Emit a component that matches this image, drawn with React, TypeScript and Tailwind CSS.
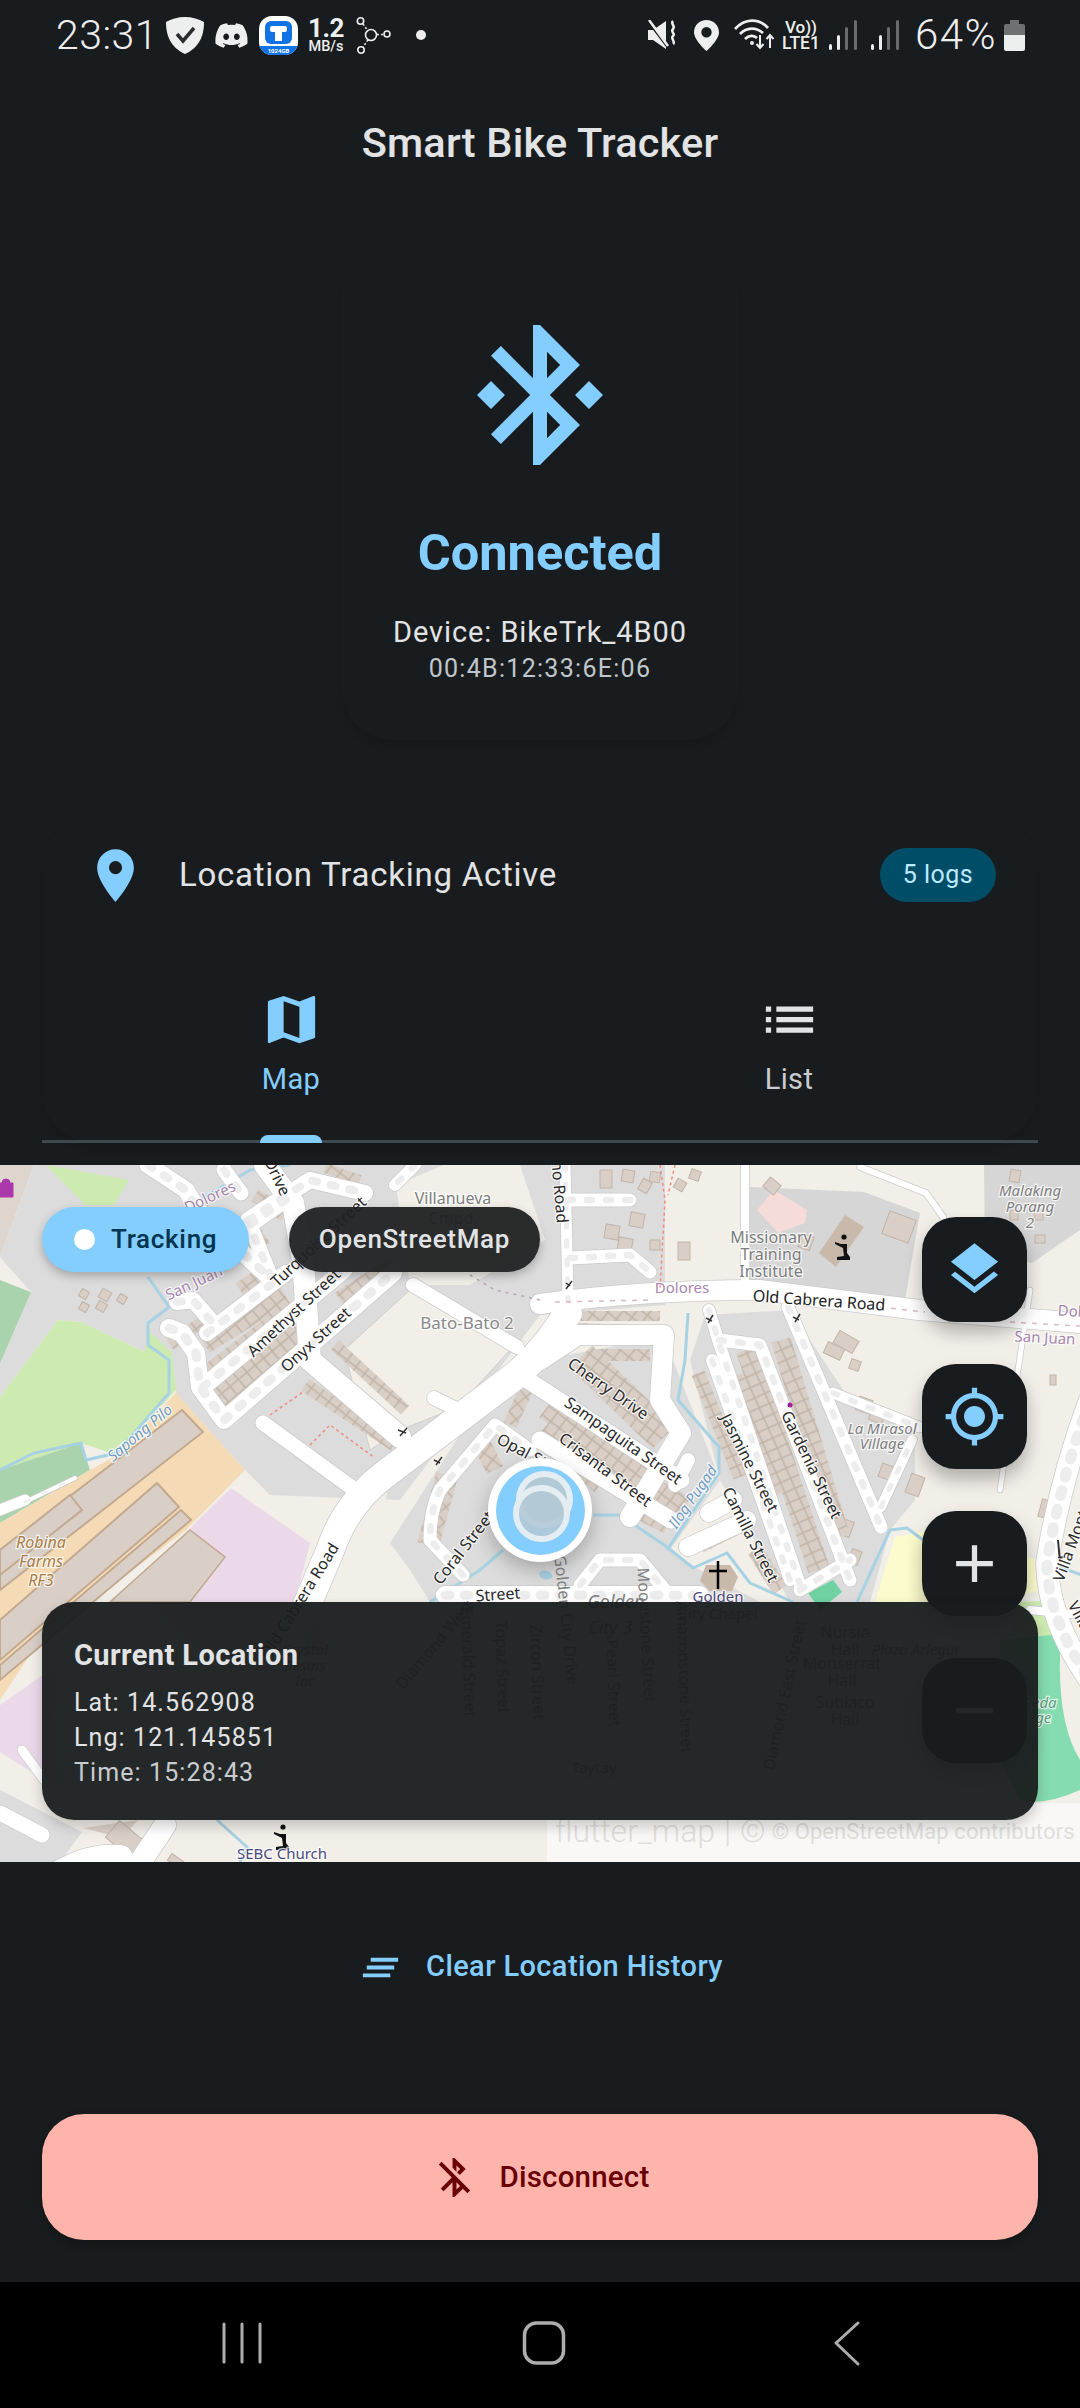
import React from "react";
import { FaDiscord } from "react-icons/fa";

const P = "#83CDFF";

function Mi({ d, size = 63, color = P, className = "" }: { d: string; size?: number; color?: string; className?: string }) {
  return (
    <svg width={size} height={size} viewBox="0 0 24 24" className={className} fill={color}>
      <path d={d} />
    </svg>
  );
}

const ICON = {
  bt: "M7 12l-2-2-2 2 2 2 2-2zm10.71-4.29L12 2h-1v7.59L6.41 5 5 6.41 10.59 12 5 17.59 6.41 19 11 14.41V22h1l5.71-5.71-4.3-4.29 4.3-4.29zM13 5.83l1.88 1.88L13 9.59V5.83zm1.88 10.46L13 18.17v-3.76l1.88 1.88zM19 10l-2 2 2 2 2-2-2-2z",
  pin: "M12 2C8.13 2 5 5.13 5 9c0 5.25 7 13 7 13s7-7.75 7-13c0-3.87-3.13-7-7-7zm0 9.5a2.5 2.5 0 0 1 0-5 2.5 2.5 0 0 1 0 5z",
  map: "M20.5 3l-.16.03L15 5.1 9 3 3.36 4.9c-.21.07-.36.25-.36.48V20.5c0 .28.22.5.5.5l.16-.03L9 18.9l6 2.1 5.64-1.9c.21-.07.36-.25.36-.48V3.5c0-.28-.22-.5-.5-.5zM15 19l-6-2.11V5l6 2.11V19z",
  list: "M3 13h2v-2H3v2zm0 4h2v-2H3v2zm0-8h2V7H3v2zm4 4h14v-2H7v2zm0 4h14v-2H7v2zM7 7v2h14V7H7z",
  layers: "M11.99 18.54l-7.37-5.73L3 14.07l9 7 9-7-1.63-1.27-7.38 5.74zM12 16l7.36-5.73L21 9l-9-7-9 7 1.63 1.27L12 16z",
  loc: "M12 8c-2.21 0-4 1.79-4 4s1.79 4 4 4 4-1.79 4-4-1.79-4-4-4zm8.94 3c-.46-4.17-3.77-7.48-7.94-7.94V1h-2v2.06C6.83 3.52 3.52 6.83 3.06 11H1v2h2.06c.46 4.17 3.77 7.48 7.94 7.94V23h2v-2.06c4.17-.46 7.48-3.77 7.94-7.94H23v-2h-2.06zM12 19c-3.87 0-7-3.13-7-7s3.13-7 7-7 7 3.13 7 7-3.13 7-7 7z",
  add: "M19 13h-6v6h-2v-6H5v-2h6V5h2v6h6v2z",
  remove: "M19 13H5v-2h14v2z",
  clear: "M5 13h14v-2H5v2zm-2 4h14v-2H3v2zM7 7v2h14V7H7z",
  btoff: "M13 5.83l1.88 1.88-1.6 1.6 1.41 1.41 3.02-3.02L12 2h-1v5.03l2 2v-3.2zM5.41 4L4 5.41 10.59 12 5 17.59 6.41 19 11 14.41V22h1l4.29-4.29 2.3 2.29L20 18.59 5.41 4zM13 18.17v-3.76l1.88 1.88L13 18.17z",
};

function StatusBar() {
  const fg = "#EDEEEE";
  return (
    <div className="h-[70px] pl-[56px] pr-[55px] flex items-center justify-between text-[#EDEEEE]">
      <div className="flex items-center">
        <span className="text-[41px] font-light leading-none w-[110px] tracking-[0.5px]">23:31</span>
        <svg width="38" height="37" viewBox="0 0 38 37">
          <path d="M19 0C12 0 5 2 0 5c0 13 4 25 19 32C34 30 38 18 38 5 33 2 26 0 19 0z" fill={fg} />
          <path d="M11 17l6 7 11-13" fill="none" stroke="#2a2d2e" strokeWidth="3.5" />
        </svg>
        <FaDiscord size={35} className="ml-[10px]" />
        <div className="ml-[10px] w-[39px] h-[39px] rounded-[13px] bg-white overflow-hidden relative">
          <div className="absolute left-[6px] top-[5px] w-[27px] h-[23px] rounded-[6px] bg-[#1273E6]" />
          <div className="absolute left-[11px] top-[10px] w-[17px] h-[6px] rounded-[2px] bg-white" />
          <div className="absolute left-[16px] top-[14px] w-[7px] h-[11px] bg-white" />
          <div className="absolute left-0 right-0 bottom-0 h-[9px] bg-[#1273E6] text-[6px] font-bold text-center leading-[9px] text-white">1024GB</div>
        </div>
        <div className="ml-[8px] w-[40px] flex flex-col items-center">
          <span className="text-[26px] font-bold leading-[22px] tracking-[-0.5px]">1.2</span>
          <span className="text-[14.5px] font-medium leading-[15px]">MB/s</span>
        </div>
        <svg width="36" height="37" viewBox="0 0 36 37" className="ml-[10px]" fill="none" stroke={fg} strokeWidth="1.6">
          <circle cx="4.5" cy="4" r="3.2" />
          <circle cx="31" cy="17" r="3" />
          <circle cx="5" cy="33" r="3.2" />
          <circle cx="15" cy="18" r="5.5" />
          <path d="M7 7l5 7M21 17.500h6M12 23l-5 7" strokeDasharray="2 2" />
        </svg>
        <div className="ml-[24px] w-[10px] h-[10px] rounded-full bg-[#EDEEEE]" />
      </div>
      <div className="flex items-center">
        <svg width="30" height="30" viewBox="0 0 30 30" fill={fg}>
          <path d="M0 10h5L18 1v28L5 20H0z" />
          <path d="M1 2l19 25" stroke="#191C1E" strokeWidth="3" />
          <path d="M1 0l19 26" stroke={fg} strokeWidth="2.5" />
          <path d="M25 1c-3 3 3 5 0 8s3 5 0 7 3 6 0 8" fill="none" stroke={fg} strokeWidth="2.500" />
        </svg>
        <svg width="25" height="31" viewBox="0 0 25 31" className="ml-[16px]" fill={fg}>
          <path fillRule="evenodd" d="M12.5 0C5.600 0 0 5.400 0 12.200 0 20 12.500 31 12.500 31S25 20 25 12.200C25 5.400 19.400 0 12.500 0zm0 7a5.200 5.200 0 1 1 0 10.400 5.200 5.200 0 0 1 0-10.400z" />
        </svg>
        <svg width="42" height="32" viewBox="0 0 42 32" className="ml-[15px]" fill="none" stroke={fg} strokeWidth="2.8">
          <path d="M1 10C11 -1 25 -1 34 9M6 15c7-7 16-7 23-1M11 20c4-4 9-4 12-1" />
          <circle cx="18" cy="24" r="2" fill={fg} stroke="none" />
          <path d="M26 16v13m-3.500-4l3.500 4 3.500-4M36 29V16m-3.500 4l3.500-4 3.500 4" strokeWidth="2" />
        </svg>
        <div className="ml-[5px] w-[40px] flex flex-col items-center">
          <span className="text-[17px] leading-[17px] font-medium">Vo))</span>
          <span className="text-[17.500px] leading-[15px] font-medium tracking-[0px]">LTE1</span>
        </div>
        {[0, 1].map((i) => (
          <svg key={i} width="29" height="30" viewBox="0 0 29 30" className={i === 0 ? "ml-[8px]" : "ml-[13px]"}>
            <rect x="0" y="24" width="3" height="6" rx="1.500" fill={fg} />
            <rect x="8" y="15" width="3" height="15" rx="1.500" fill={fg} />
            <rect x="16" y="7" width="3" height="23" rx="1.500" fill="#6a6c6d" />
            <rect x="25" y="0" width="3" height="30" rx="1.500" fill="#6a6c6d" />
          </svg>
        ))}
        <span className="ml-[15px] w-[82px] text-[42px] font-light leading-none tracking-[1.5px] whitespace-nowrap">64%</span>
        <svg width="21" height="31" viewBox="0 0 21 31" className="ml-[7px]">
          <path d="M6 0h9v4h4a2 2 0 0 1 2 2v9H0V6a2 2 0 0 1 2-2h4z" fill="#6f7071" />
          <path d="M0 15h21v14a2 2 0 0 1-2 2H2a2 2 0 0 1-2-2z" fill={fg} />
        </svg>
      </div>
    </div>
  );
}

type RoadT = [string, number, boolean?];
const roads: RoadT[] = [
  ["M292 1640L330 1551Q345 1505 384 1475L507 1382Q540 1358 568 1313", 28],
  ["M540 1304Q640 1290 760 1290L919 1310L1080 1323", 20],
  ["M265 1165L293 1203L303 1260L310 1360L400 1437", 22],
  ["M148 1165L186 1190L200 1213L272 1280", 17, true],
  ["M224 1170L241 1193", 15, true],
  ["M177 1302L193 1300L213 1323", 16, true],
  ["M169 1328L182 1333L196 1353L200 1387L224 1420L393 1273", 18, true],
  ["M203 1387L344 1270", 17, true],
  ["M207 1333L286 1273", 16, true],
  ["M248 1220L310 1180L365 1193", 16, true],
  ["M286 1200L250 1225L272 1280", 15, true],
  ["M413 1285L517 1347", 14],
  ["M434 1398L458 1410", 14],
  ["M263 1423L351 1487", 15],
  ["M415 1165L395 1185", 12, true],
  ["M565 1165L568 1300", 11, true],
  ["M568 1200H630", 13, true],
  ["M570 1258L630 1255L650 1272", 13, true],
  ["M540 1360L578 1335H664L660 1400L681 1433L630 1517", 20],
  ["M520 1375L681 1480", 17],
  ["M540 1440L671 1520", 17],
  ["M688 1460L675 1485", 14],
  ["M745 1165V1290", 8],
  ["M860 1167L926 1193L943 1217", 6],
  ["M709 1310L719 1343L800 1585", 12, true],
  ["M712 1360L790 1580", 12, true],
  ["M719 1340L760 1345L850 1580", 13, true],
  ["M788 1307L881 1527", 13, true],
  ["M833 1393L919 1427", 11, true],
  ["M881 1507L912 1440", 10, true],
  ["M688 1547L747 1520", 18],
  ["M709 1513L733 1500", 18],
  ["M800 1590L850 1560", 13, true],
  ["M1090 1400Q1060 1480 1047 1563Q1048 1620 1090 1680", 22, true],
  ["M1030 1290L1000 1490", 5],
  ["M463 1575L430 1540Q430 1510 440 1490L495 1425L530 1450", 13, true],
  ["M445 1595H700", 18, true],
  ["M580 1585L600 1560H640L665 1590", 13, true],
  ["M0 1813L42 1835", 15],
  ["M165 1825L135 1870", 22],
  ["M50 1880Q85 1855 120 1858", 26],
  ["M22 1750L44 1780", 9],
  ["M0 1510L25 1500", 11],
  ["M25 1502L75 1478", 4, true],
  ["M1030 1610L1080 1615", 8],
];

type StripT = [string, number, string];
const strips: StripT[] = [
  ["M205 1380L295 1310", 24, "h1"],
  ["M218 1402L300 1332", 28, "h1"],
  ["M340 1300L395 1265", 18, "h1"],
  ["M205 1345L285 1295", 18, "h1"],
  ["M240 1290L270 1270", 16, "h1"],
  ["M170 1345L205 1320", 12, "h1"],
  ["M220 1265L265 1235", 18, "h1"],
  ["M305 1385L395 1445", 14, "h2"],
  ["M335 1345L405 1410", 12, "h2"],
  ["M255 1195L285 1215", 14, "h2"],
  ["M190 1195L205 1210", 12, "h2"],
  ["M325 1168L360 1180", 10, "h2"],
  ["M547 1407L643 1480", 26, "h2"],
  ["M581 1357L664 1437", 32, "h2"],
  ["M540 1433L602 1483", 24, "h2"],
  ["M650 1487L685 1507", 22, "h2"],
  ["M640 1513L667 1527", 14, "h2"],
  ["M560 1316H660", 10, "h2"],
  ["M575 1328L665 1331", 10, "h2"],
  ["M595 1355H650", 12, "h2"],
  ["M528 1385L510 1425", 14, "h1"],
  ["M747 1350L819 1570", 22, "h3"],
  ["M733 1377L781 1493", 20, "h3"],
  ["M781 1340L840 1537", 20, "h3"],
  ["M698 1373L740 1477", 14, "h3"],
  ["M700 1545L750 1520", 16, "h1"],
  ["M755 1550L780 1590", 16, "h3"],
  ["M447 1475L428 1545", 22, "h1"],
  ["M480 1440L495 1470", 18, "h2"],
];

const blocks: [number, number, number, number, number][] = [
  [100, 1290, 10, 10, 30], [80, 1290, 8, 8, 30], [97, 1302, 9, 9, 30], [118, 1295, 8, 8, 30], [80, 1303, 8, 8, 30],
  [622, 1170, 12, 12, 10], [605, 1225, 14, 14, 10], [630, 1213, 14, 14, 10], [618, 1238, 14, 14, 10], [650, 1240, 10, 10, 0], [678, 1242, 12, 18, 0],
  [600, 1170, 12, 18, 0], [640, 1180, 10, 12, 30], [650, 1172, 10, 10, 10], [675, 1180, 10, 10, 30], [690, 1170, 10, 10, 20],
  [885, 1215, 28, 24, 20], [765, 1180, 14, 12, 40], [800, 1235, 12, 14, 20],
  [825, 1345, 18, 12, 25], [835, 1335, 22, 14, 30], [850, 1360, 10, 10, 20], [857, 1398, 14, 14, 20], [870, 1410, 14, 12, 20],
  [880, 1465, 14, 14, 20], [908, 1475, 14, 20, 20], [955, 1372, 8, 10, 0], [1050, 1375, 6, 10, 0], [992, 1415, 14, 14, 0], [1040, 1500, 12, 18, 15],
  [1045, 1545, 8, 18, 15], [840, 1520, 12, 16, 20], [850, 1550, 10, 14, 20], [975, 1300, 20, 20, 0],
  [168, 1858, 18, 8, 35], [108, 1830, 38, 22, 40], [1010, 1210, 8, 10, 0], [1035, 1210, 8, 10, 0], [1035, 1235, 10, 8, 0], [1010, 1170, 10, 12, 10],
];

type L = { t: string; x: number; y: number; r?: number; s: number; c?: string; i?: boolean };
const labels: L[] = [
  { t: "Villanueva", x: 453, y: 1204, s: 16, c: "#7d7d7d" },
  { t: "Cmpd.", x: 453, y: 1224, s: 16, c: "#7d7d7d" },
  { t: "Bato-Bato 2", x: 467, y: 1329, s: 17, c: "#8a8a8a" },
  { t: "Missionary", x: 771, y: 1243, s: 16, c: "#7d7d7d" },
  { t: "Training", x: 771, y: 1260, s: 16, c: "#7d7d7d" },
  { t: "Institute", x: 771, y: 1277, s: 16, c: "#7d7d7d" },
  { t: "Dolores", x: 682, y: 1293, s: 15, c: "#a586ad" },
  { t: "Dolores", x: 210, y: 1202, s: 15, c: "#a586ad", r: -25 },
  { t: "San Juan", x: 194, y: 1288, s: 15, c: "#a586ad", r: -25 },
  { t: "Dolores", x: 1085, y: 1317, s: 15, c: "#a586ad", r: 3 },
  { t: "San Juan", x: 1045, y: 1343, s: 15, c: "#a586ad", r: 3 },
  { t: "Malaking", x: 1030, y: 1196, s: 15, c: "#808080", i: true },
  { t: "Porang", x: 1030, y: 1212, s: 15, c: "#808080", i: true },
  { t: "2", x: 1030, y: 1228, s: 15, c: "#808080", i: true },
  { t: "Old Cabrera Road", x: 819, y: 1306, s: 16, c: "#222", r: 4 },
  { t: "Cherry Drive", x: 608, y: 1394, s: 16, r: 35 },
  { t: "Sampaguita Street", x: 623, y: 1446, s: 16, r: 35 },
  { t: "Crisanta Street", x: 605, y: 1475, s: 16, r: 37 },
  { t: "Jasmine Street", x: 749, y: 1468, s: 16, r: 63 },
  { t: "Gardenia Street", x: 811, y: 1470, s: 16, r: 64 },
  { t: "Camilla Street", x: 750, y: 1540, s: 16, r: 63 },
  { t: "Ilog Pugad", x: 693, y: 1502, s: 15, c: "#6f9bc4", i: true, r: -55 },
  { t: "Sapong Pilo", x: 140, y: 1438, s: 15, c: "#6f9bc4", i: true, r: -40 },
  { t: "La Mirasol", x: 882, y: 1434, s: 15, c: "#808080", i: true },
  { t: "Village", x: 882, y: 1449, s: 15, c: "#808080", i: true },
  { t: "Golden", x: 718, y: 1602, s: 15, c: "#4a4a7a" },
  { t: "City Chapel", x: 718, y: 1619, s: 15, c: "#4a4a7a" },
  { t: "Villa Montserrat", x: 1079, y: 1530, s: 16, r: -70 },
  { t: "Villa Montserrat", x: 1100, y: 1660, s: 16, r: 62 },
  { t: "Opal Street", x: 535, y: 1463, s: 16, r: 28 },
  { t: "Coral Street", x: 464, y: 1553, s: 16, r: -52 },
  { t: "Onyx Street", x: 316, y: 1345, s: 16, r: -42 },
  { t: "Amethyst Street", x: 294, y: 1318, s: 16, r: -43 },
  { t: "Turquoise Street", x: 319, y: 1247, s: 16, r: -43 },
  { t: "Drive", x: 277, y: 1182, s: 16, r: 65 },
  { t: "ino Road", x: 559, y: 1195, s: 16, r: 85 },
  { t: "Robina", x: 41, y: 1548, s: 16, c: "#a87c45", i: true },
  { t: "Farms", x: 41, y: 1567, s: 16, c: "#a87c45", i: true },
  { t: "RF3", x: 41, y: 1586, s: 16, c: "#a87c45", i: true },
  { t: "Old Cabrera Road", x: 300, y: 1606, s: 16, r: -58 },
  { t: "Street", x: 498, y: 1600, s: 16, r: -4 },
  { t: "Diamond West", x: 435, y: 1650, s: 16, r: -50 },
  { t: "Golden City Drive", x: 566, y: 1625, s: 16, r: 84 },
  { t: "Moonstone Street", x: 646, y: 1640, s: 16, r: 87 },
  { t: "Golden", x: 616, y: 1608, s: 18, c: "#808080", i: true },
  { t: "City 3", x: 610, y: 1634, s: 18, c: "#808080", i: true },
  { t: "Emerald Street", x: 468, y: 1667, s: 16, r: 88 },
  { t: "Topaz Street", x: 502, y: 1672, s: 16, r: 88 },
  { t: "Zircon Street", x: 537, y: 1677, s: 16, r: 88 },
  { t: "Pearl Street", x: 613, y: 1688, s: 16, r: 88 },
  { t: "Amazonstone Street", x: 684, y: 1682, s: 16, r: 88 },
  { t: "Diamond East Street", x: 785, y: 1700, s: 16, r: -78 },
  { t: "Nursia", x: 845, y: 1638, s: 16, c: "#666" },
  { t: "Hall", x: 845, y: 1655, s: 16, c: "#666" },
  { t: "Monserrat", x: 842, y: 1669, s: 16, c: "#666" },
  { t: "Hall", x: 842, y: 1686, s: 16, c: "#666" },
  { t: "Subiaco", x: 845, y: 1708, s: 16, c: "#666" },
  { t: "Hall", x: 845, y: 1725, s: 16, c: "#666" },
  { t: "Plaza Arlegui", x: 915, y: 1655, s: 15, c: "#666", i: true },
  { t: "Taytay", x: 594, y: 1773, s: 15, c: "#666" },
  { t: "Crystal", x: 305, y: 1655, s: 15, c: "#666", i: true },
  { t: "Resins", x: 305, y: 1671, s: 15, c: "#666", i: true },
  { t: "Inc", x: 305, y: 1686, s: 15, c: "#666", i: true },
  { t: "SEBC Church", x: 282, y: 1859, s: 15, c: "#4a4a7a" },
  { t: "Reda", x: 1040, y: 1708, s: 15, c: "#5f9f80", i: true },
  { t: "College", x: 1027, y: 1723, s: 15, c: "#5f9f80", i: true },
];

function Kneel({ x, y }: { x: number; y: number }) {
  return (
    <g transform={`translate(${x} ${y})`} fill="#111">
      <circle cx="1" cy="-11" r="2.600" />
      <path d="M-8-6l6 2h6v9l3 4v3H-6v-3l7-1-1-8-8-4z" />
    </g>
  );
}

function underPanel(l: L) {
  return l.y > 1606 && l.y < 1820 && l.x > 60 && l.x < 1020;
}

function MapArt() {
  const drawn = roads.filter((r) => r[1] > 0);
  return (
    <svg className="absolute inset-0 w-full h-full" viewBox="0 1165 1080 697" fontFamily="'Noto Sans', sans-serif">
      <defs>
        {[
          ["h1", -40],
          ["h2", 38],
          ["h3", 66],
        ].map(([id, a]) => (
          <pattern key={id as string} id={id as string} width="11" height="11" patternUnits="userSpaceOnUse" patternTransform={`rotate(${a})`}>
            <rect width="11" height="11" fill="#d9cfc7" stroke="#c2b3a6" strokeWidth="1.500" />
          </pattern>
        ))}
      </defs>
      <rect x="0" y="1165" width="1080" height="697" fill="#f2efe9" />
      {/* landuse */}
      <path d="M0 1165H34L0 1257z" fill="#dfd5cf" />
      <path d="M34 1165H665V1305L540 1315L400 1500L270 1495L245 1470L176 1393L172 1353L145 1352L81 1322L58 1320L0 1397V1257z" fill="#dcdcdc" />
      <path d="M46 1165L129 1180L114 1205L85 1205z" fill="#cdebb0" />
      <path d="M0 1280L31 1292L0 1363z" fill="#a9d3ac" />
      <path d="M0 1257L31 1292L0 1280z" fill="#f2efe9" />
      <path d="M0 1397L58 1320L81 1322L145 1352L148 1330L172 1353L176 1390L117 1455L81 1443L0 1470z" fill="#cdebb0" />
      <path d="M0 1470L81 1443L90 1470L0 1523z" fill="#a9d3ac" />
      <path d="M0 1523L90 1470L117 1455L176 1393L245 1470L186 1530L40 1640L0 1700z" fill="#f5dbb5" />
      <path d="M182 1410L203 1432L0 1590V1550z" fill="#d9cfc7" stroke="#c2a98f" strokeWidth="2" />
      <path d="M157 1483L179 1507L0 1660V1620z" fill="#d9cfc7" stroke="#c2a98f" strokeWidth="2" />
      <path d="M181 1510L191 1520L0 1680V1665z" fill="#d9cfc7" stroke="#c2a98f" strokeWidth="2" />
      <path d="M70 1495L82 1510L0 1575V1550z" fill="#d9cfc7" stroke="#c2a98f" strokeWidth="2" />
      <path d="M191 1527L231 1488L310 1543L295 1602L330 1650L200 1650L150 1602z" fill="#ebd9e9" />
      <path d="M190 1530L225 1557L190 1602H130L110 1602z" fill="#d9cfc7" stroke="#c2a98f" strokeWidth="1.500" />
      <path d="M0 1705L50 1670L60 1790L0 1752z" fill="#ebd9e9" />
      <path d="M0 1790L82 1832L60 1862H0z" fill="#dcdcdc" />
      <path d="M83 1828L138 1820L122 1838z" fill="#d9cfc7" />
      {/* beige cutouts */}
      <path d="M344 1350L410 1290L510 1350L458 1407L400 1430L370 1450z" fill="#f2efe9" stroke="#cfcfcf" />
      <path d="M396 1185L444 1165H520L545 1240L470 1285L410 1285z" fill="#f2efe9" />
      <path d="M250 1400L265 1410L300 1445L250 1470z" fill="#dcdcdc" />
      <path d="M340 1500L396 1448L380 1530L350 1620L320 1620z" fill="#f2efe9" />
      <path d="M390 1543L463 1430L540 1360L664 1337L720 1480L670 1550L700 1570L760 1602H430L410 1570z" fill="#dcdcdc" />
      <path d="M705 1315L790 1310L850 1400L915 1420V1500L890 1530L870 1602H790L720 1480L690 1360z" fill="#dcdcdc" />
      <path d="M750 1187L864 1192L920 1213L905 1300L750 1287z" fill="#d6d6d6" />
      <path d="M757 1210L774 1190L807 1210L805 1223L778 1233z" fill="#f5dcd9" />
      <path d="M845 1215L864 1227L836 1267L819 1253z" fill="#c9b9aa" />
      <path d="M984 1165H1080V1230L1032 1263L985 1255z" fill="#d6d6d6" />
      <path d="M895 1537L930 1530L1040 1560L1040 1590L1000 1602H875z" fill="#fbfbcd" />
      <path d="M808 1593L833 1580L842 1592L820 1610z" fill="#70d2a3" />
      <path d="M1020 1602L1060 1600L1050 1637L1010 1637z" fill="#cdebb0" />
      <path d="M1000 1640L1061 1634Q1055 1720 1080 1760V1790Q1045 1806 1020 1800L1000 1760z" fill="#85dcb0" />
      {/* small buildings */}
      {blocks.map(([x, y, w, h, r], i) => (
        <rect key={i} x={x} y={y} width={w} height={h} transform={`rotate(${r} ${x + w / 2} ${y + h / 2})`} fill="#d9cfc7" stroke="#c2b3a6" />
      ))}
      {strips.map(([d, w, p], i) => (
        <path key={i} d={d} stroke={`url(#${p})`} strokeWidth={w} fill="none" />
      ))}
      {/* water */}
      <g fill="none" stroke="#a6d2e3" strokeWidth="3" strokeLinejoin="round">
        <path d="M148 1277L169 1307L148 1323V1345L169 1360V1393L117 1453L86 1460L81 1443L34 1453L0 1470" />
        <path d="M200 1200L250 1170L290 1165" />
        <path d="M430 1602L480 1570L503 1550" />
        <path d="M593 1515H620L667 1547L693 1568L727 1553L750 1583L793 1602" />
        <path d="M857 1602L890 1530L907 1528L923 1540" />
        <path d="M688 1313L685 1360L678 1400L719 1447V1473L667 1550" />
        <path d="M217 1820L247 1847L240 1862" />
        <path d="M1040 1560L1090 1578" />
      </g>
      <path d="M540 1572c4-3 10-1 12 3s-4 5-8 4-6-4-4-7z" fill="#a6d2e3" />
      {/* roads */}
      {drawn.map(([d, w], i) => (
        <path key={`c${i}`} d={d} fill="none" stroke="#cbcbcb" strokeWidth={w + 1.500} strokeLinecap="round" strokeLinejoin="round" />
      ))}
      {drawn.map(([d, w], i) => (
        <path key={`w${i}`} d={d} fill="none" stroke="#fff" strokeWidth={w} strokeLinecap="round" strokeLinejoin="round" />
      ))}
      {drawn.filter((r) => r[2]).map(([d, w], i) => (
        <path key={`d${i}`} d={d} fill="none" stroke="#ededed" strokeWidth={w * 0.5} strokeLinecap="round" strokeLinejoin="round" strokeDasharray="5 14" />
      ))}
      <path d="M555 1302L650 1300M880 1307L925 1312M1010 1322L1080 1326" fill="none" stroke="#d9b8c8" strokeWidth="1.500" strokeDasharray="5 6" />
      <path d="M660 1165L665 1200L660 1290M675 1165L668 1195" fill="none" stroke="#f08a80" strokeWidth="1.500" strokeDasharray="3 3" />
      <path d="M270 1415L303 1392M310 1445L330 1425L375 1458" fill="none" stroke="#f08a80" strokeWidth="1.500" strokeDasharray="3 3" />
      <path d="M470 1275L495 1290L540 1300" fill="none" stroke="#b9a6b9" strokeWidth="1.500" strokeDasharray="3 5" />
      {/* pois */}
      <circle cx="790" cy="1405" r="2.500" fill="#a020a0" />
      <Kneel x={843} y={1248} />
      <Kneel x={282} y={1838} />
      <path d="M706 1565h24l8 12-6 14h-22l-10-10z" fill="#c9b9aa" />
      <path d="M718 1561v28M709 1571h18" stroke="#000" strokeWidth="2.500" />
      <path d="M2 1183a4 4 0 0 1 8 0M0 1183h13v14H0z" fill="#ac39ac" stroke="#ac39ac" />
      <path d="M398 1430l8 3M400 1436l7-8M434 1460l6 3M436 1465l6-8M566 1283l4 3M566 1289l6-8M706 1318l6 3M708 1323l5-8M793 1317l6 3M795 1322l5-8" stroke="#333" strokeWidth="1.500" />
      <path d="M1058 1558l6-1 M1058 1540l2 22" stroke="#333" strokeWidth="2" />
      {/* labels */}
      {labels.map((l, i) => (
        <text
          key={i}
          x={l.x}
          y={l.y}
          textAnchor="middle"
          fontSize={l.s}
          fill={underPanel(l) ? "#808080" : (l.c ?? "#2a2a2a")}
          fontStyle={l.i ? "italic" : "normal"}
          stroke={underPanel(l) ? "none" : "#ffffff"}
          strokeOpacity={0.75}
          strokeWidth={2.5}
          paintOrder="stroke"
          transform={l.r ? `rotate(${l.r} ${l.x} ${l.y - 5})` : undefined}
        >
          {l.t}
        </text>
      ))}
    </svg>
  );
}

function Fab({ d, color, top }: { d: string; color: string; top: string }) {
  return (
    <div className={`absolute left-[922px] w-[105px] h-[105px] rounded-[34px] bg-[#191C1E] flex items-center justify-center shadow-[0_10px_18px_rgba(0,0,0,0.28)] ${top}`}>
      <Mi d={d} color={color} />
    </div>
  );
}

function MapSection() {
  return (
    <div className="relative h-[697px] mt-[22px] overflow-hidden">
      <MapArt />
      {/* attribution */}
      <div className="absolute right-0 bottom-0 w-[533px] h-[59px] bg-[#f9f8f6] flex items-end pl-[8px] pb-[11px] whitespace-nowrap text-[#dfdedb]">
        <span className="text-[32px] font-light leading-[40px]">flutter_map</span>
        <span className="text-[32px] font-light leading-[40px] ml-[9px]">|</span>
        <span className="text-[32px] font-light leading-[40px] ml-[9px]">©</span>
        <span className="text-[22px] leading-[38px] ml-[6px] tracking-[0.1px]">© OpenStreetMap contributors</span>
      </div>
      {/* marker */}
      <div className="absolute left-[488px] top-[293px] w-[104px] h-[104px] rounded-full bg-white shadow-[0_8px_20px_rgba(0,0,0,0.25)] flex items-center justify-center">
        <div className="relative w-[89px] h-[89px] rounded-full bg-[#83CDFF]">
          <div className="absolute left-[20px] top-[5px] w-[57px] h-[57px] rounded-full bg-[#b2c9d6] border-[6px] border-[#e3edf2]" />
          <div className="absolute left-[17px] top-[19px] w-[57px] h-[57px] rounded-full bg-[#b2c9d6]/90 border-[6px] border-[#e3edf2]" />
        </div>
      </div>
      {/* chips */}
      <div className="absolute left-[42px] top-[42px] w-[207px] h-[65px] rounded-full bg-[#83CDFF] flex items-center pl-[32px] shadow-[0_4px_10px_rgba(0,0,0,0.25)]">
        <div className="w-[21px] h-[21px] rounded-full bg-white" />
        <span className="ml-[16px] text-[26px] font-medium text-[#00344F] tracking-[0.7px]">Tracking</span>
      </div>
      <div className="absolute left-[289px] top-[42px] w-[251px] h-[65px] rounded-full bg-[#1f2122]/95 flex items-center justify-center shadow-[0_4px_10px_rgba(0,0,0,0.25)]">
        <span className="text-[26px] font-medium text-[#E1E3E5] tracking-[0.7px]">OpenStreetMap</span>
      </div>
      {/* map controls */}
      <Fab d={ICON.layers} color={P} top="top-[52px]" />
      <Fab d={ICON.loc} color={P} top="top-[199px]" />
      <Fab d={ICON.add} color="#E1E3E5" top="top-[346px]" />
      <Fab d={ICON.remove} color="#E1E3E5" top="top-[493px]" />
      {/* info panel */}
      <div className="absolute left-[42px] top-[437px] w-[996px] h-[218px] rounded-[32px] bg-[#191C1E]/95 pl-[32px] pt-[34px] text-[#E1E3E5] shadow-[0_6px_14px_rgba(0,0,0,0.2)]">
        <div className="text-[29px] font-bold leading-[38px] tracking-[0.4px]">Current Location</div>
        <div className="mt-[11px] text-[25px] leading-[35px] tracking-[1.1px]">Lat: 14.562908</div>
        <div className="text-[25px] leading-[35px] tracking-[1.1px]">Lng: 121.145851</div>
        <div className="text-[25px] leading-[35px] tracking-[1.1px] text-[#c9ccce]">Time: 15:28:43</div>
      </div>
    </div>
  );
}

export default function App() {
  return (
    <div className="w-[1080px] h-[2408px] flex flex-col bg-[#191C1E] overflow-hidden font-[family-name:Roboto]">
      <StatusBar />
      <div className="h-[146px] flex items-center justify-center text-[41.5px] font-medium text-[#E1E3E5] tracking-[0.2px]">Smart Bike Tracker</div>
      {/* connection card */}
      <div className="mt-[32px] self-center w-[398px] h-[492px] rounded-[52px] bg-[#191C1E] shadow-[0_6px_10px_-2px_rgba(0,0,0,0.16)] flex flex-col items-center pt-[63px]">
        <Mi d={ICON.bt} size={168} />
        <div className="mt-[44px] text-[50.5px] font-bold leading-[60px] text-[#83CDFF]">Connected</div>
        <div className="mt-[30px] text-[29px] leading-[38px] text-[#E1E3E5] tracking-[0.9px]">Device: BikeTrk_4B00</div>
        <div className="mt-[1px] text-[25px] leading-[34px] text-[#C0C7CC] tracking-[1.3px]">00:4B:12:33:6E:06</div>
      </div>
      {/* tracking card */}
      <div className="mt-[75px] mx-[42px] h-[328px] rounded-[52px] bg-[#191C1E] shadow-[0_6px_10px_-2px_rgba(0,0,0,0.16)] flex flex-col relative">
        <div className="h-[120px] flex items-center pl-[42px] pr-[42px]">
          <Mi d={ICON.pin} />
          <span className="ml-[32px] text-[33px] text-[#E1E3E5] tracking-[0.75px]">Location Tracking Active</span>
          <span className="ml-auto w-[116px] h-[54px] rounded-full bg-[#004D67] flex items-center justify-center text-[25px] text-[#BDE9FF] tracking-[0.5px]">5 logs</span>
        </div>
        <div className="flex flex-1">
          <div className="flex-1 flex flex-col items-center pt-[53px]">
            <Mi d={ICON.map} />
            <span className="mt-[10px] text-[29px] text-[#83CDFF] leading-[36px] tracking-[0.4px]">Map</span>
          </div>
          <div className="flex-1 flex flex-col items-center pt-[53px]">
            <Mi d={ICON.list} color="#E1E3E5" />
            <span className="mt-[10px] text-[29px] text-[#C8CCCF] leading-[36px] tracking-[0.4px]">List</span>
          </div>
        </div>
        <div className="h-[3px] bg-[#3F484D] relative">
          <div className="absolute left-[218px] bottom-0 w-[62px] h-[8px] rounded-t-[8px] bg-[#83CDFF]" />
        </div>
      </div>
      <MapSection />
      {/* clear */}
      <div className="mt-[81px] h-[48px] flex items-center justify-center text-[#83CDFF]">
        <Mi d={ICON.clear} size={47} />
        <span className="ml-[22px] text-[29px] font-medium tracking-[0.4px]">Clear Location History</span>
      </div>
      {/* disconnect */}
      <div className="mt-[123px] mx-[42px] h-[126px] rounded-[42px] bg-[#FFB4AB] flex items-center justify-center shadow-[0_4px_8px_rgba(0,0,0,0.25)]">
        <Mi d={ICON.btoff} size={47} color="#690005" />
        <span className="ml-[22px] text-[29.5px] font-medium text-[#690005] tracking-[0.2px]">Disconnect</span>
      </div>
      {/* nav */}
      <div className="mt-auto h-[126px] bg-black">
        <svg width="1080" height="126" viewBox="0 0 1080 126" fill="none" stroke="#ADADAD">
          <path d="M224 42v38M242 42v38M260 42v38" strokeWidth="3" strokeLinecap="round" />
          <rect x="524.500" y="41" width="39" height="40" rx="12" strokeWidth="3.500" />
          <path d="M858 41L836 61L858 82" strokeWidth="3" strokeLinecap="round" strokeLinejoin="round" />
        </svg>
      </div>
    </div>
  );
}
